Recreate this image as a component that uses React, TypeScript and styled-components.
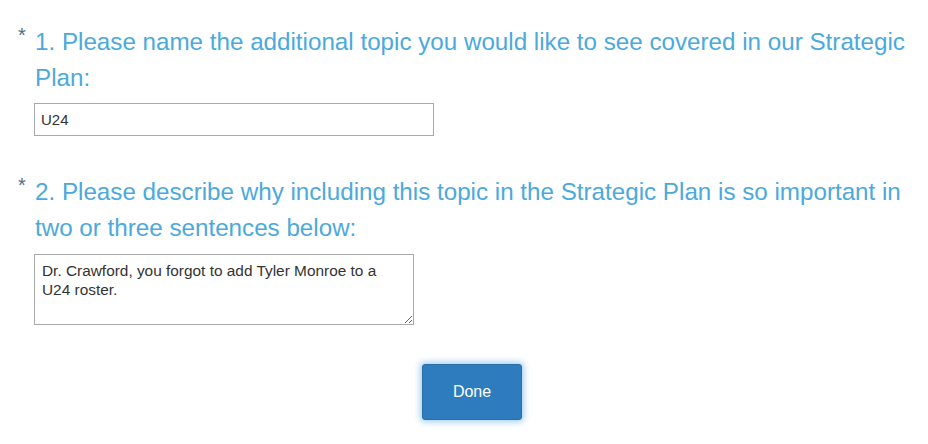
import React from "react";
import styled, { createGlobalStyle } from "styled-components";

const Global = createGlobalStyle`
  html, body { margin: 0; padding: 0; background: #ffffff; }
  body { font-family: "Liberation Sans", Arial, sans-serif; }
`;

const Page = styled.div`
  width: 928px;
  height: 444px;
  box-sizing: border-box;
  padding: 24px 0 0 18px;
  overflow: hidden;
`;

const Question = styled.div<{ $gap: number }>`
  display: flex;
  flex-direction: column;
  margin-bottom: ${(p) => p.$gap}px;
`;

const Title = styled.div`
  display: flex;
  align-items: flex-start;
  color: #4ba9dd;
  font-size: 24.2px;
  line-height: 36px;
`;

const Star = styled.span`
  width: 17px;
  flex: none;
  margin-top: -7px;
  color: #5a6b7b;
  font-size: 20px;
  line-height: 36px;
`;

const TitleText = styled.span`
  flex: 1;
  padding-right: 20px;
`;

const Field = styled.div<{ $top: number }>`
  padding: ${(p) => p.$top}px 0 0 16px;
`;

const TextInput = styled.input`
  box-sizing: border-box;
  display: block;
  width: 400px;
  height: 33px;
  border: 1px solid #a9a9a9;
  padding: 0 6px;
  font-family: "Liberation Sans", Arial, sans-serif;
  font-size: 15px;
  color: #333;
  outline: none;
`;

const TextArea = styled.textarea`
  box-sizing: border-box;
  display: block;
  width: 380px;
  height: 71px;
  border: 1px solid #a9a9a9;
  padding: 6px 7px;
  font-family: "Liberation Sans", Arial, sans-serif;
  font-size: 15.4px;
  line-height: 19px;
  color: #333;
  outline: none;
  resize: both;
`;

const Footer = styled.div`
  display: flex;
  justify-content: center;
  width: 908px;
`;

const DoneButton = styled.button`
  width: 100px;
  height: 56px;
  background: #2e7cbd;
  color: #ffffff;
  border: 1px solid #2a6ea8;
  border-radius: 3px;
  font-family: "Liberation Sans", Arial, sans-serif;
  font-size: 16px;
  box-shadow: 0 0 6px 2px rgba(102, 175, 233, 0.6);
  cursor: pointer;
`;

export default function App() {
  return (
    <>
      <Global />
      <Page>
        <Question $gap={38}>
          <Title>
            <Star>*</Star>
            <TitleText>
              1. Please name the additional topic you would like to see covered in our Strategic Plan:
            </TitleText>
          </Title>
          <Field $top={7}>
            <TextInput defaultValue="U24" />
          </Field>
        </Question>
        <Question $gap={39}>
          <Title>
            <Star>*</Star>
            <TitleText>
              2. Please describe why including this topic in the Strategic Plan is so important in two or three sentences below:
            </TitleText>
          </Title>
          <Field $top={8}>
            <TextArea defaultValue={"Dr. Crawford, you forgot to add Tyler Monroe to a U24 roster."} />
          </Field>
        </Question>
        <Footer>
          <DoneButton>Done</DoneButton>
        </Footer>
      </Page>
    </>
  );
}
